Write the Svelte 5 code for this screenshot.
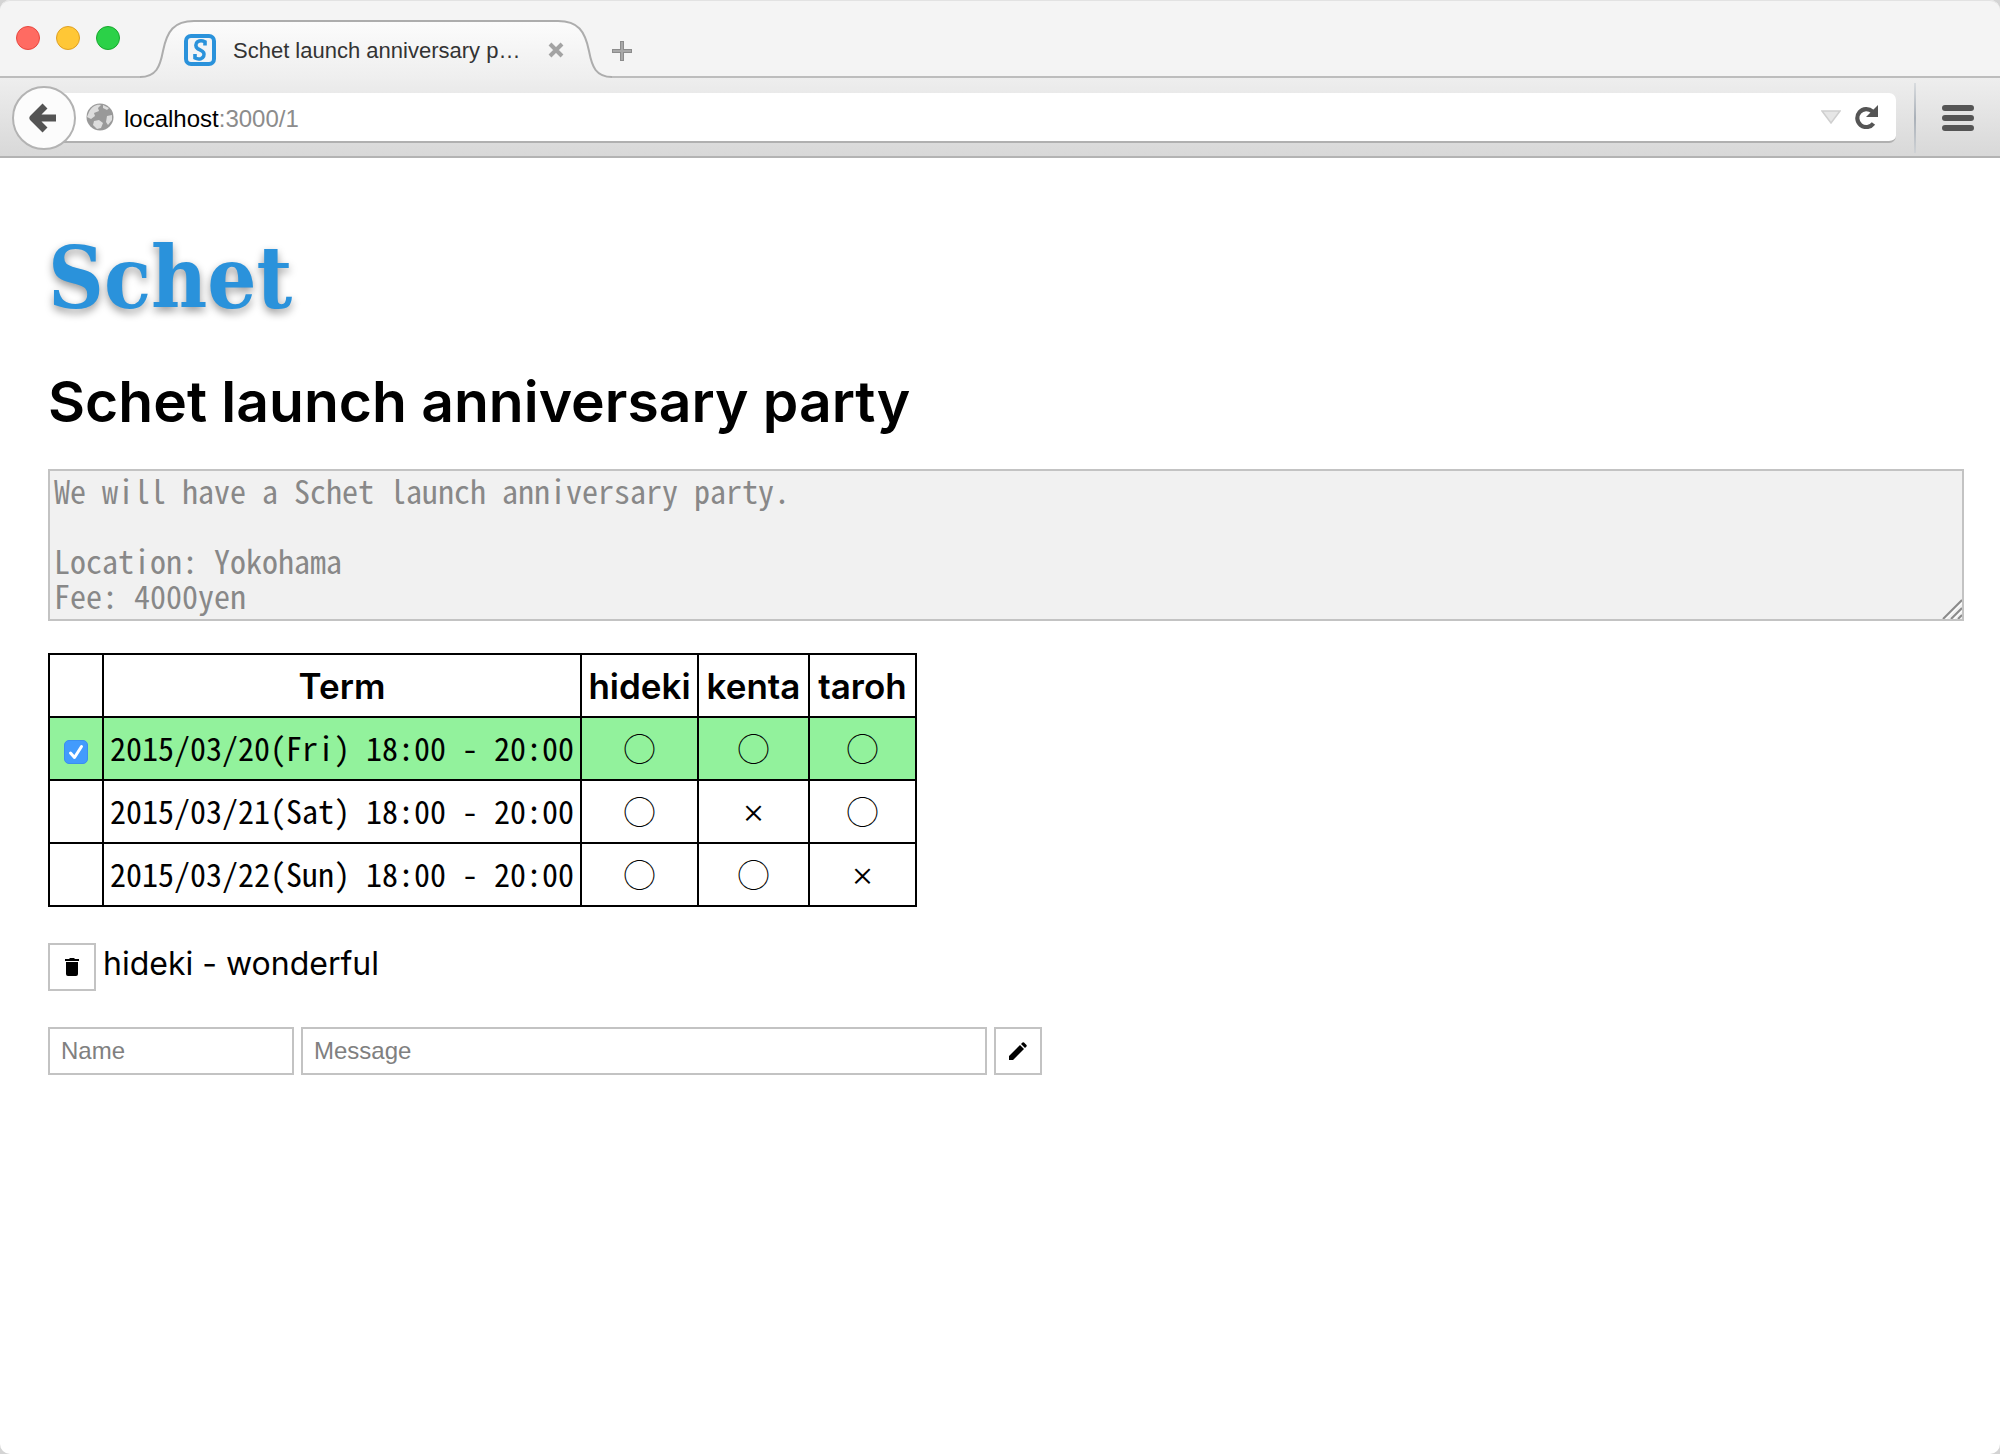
<script>
  const people = ['hideki', 'kenta', 'taroh'];
  const terms = [
    { label: '2015/03/20(Fri) 18:00 - 20:00', fixed: true, marks: ['◯', '◯', '◯'] },
    { label: '2015/03/21(Sat) 18:00 - 20:00', fixed: false, marks: ['◯', '×', '◯'] },
    { label: '2015/03/22(Sun) 18:00 - 20:00', fixed: false, marks: ['◯', '◯', '×'] }
  ];
  const description = 'We will have a Schet launch anniversary party.\n\nLocation: Yokohama\nFee: 4000yen';
</script>

<div class="window">
  <header>
    <div class="tabstrip">
      <div class="lights">
        <button class="light red" aria-label="Close window"></button>
        <button class="light yellow" aria-label="Minimize window"></button>
        <button class="light green" aria-label="Zoom window"></button>
      </div>
      <div class="tab">
        <svg class="tabshape" viewBox="0 0 474 60" width="474" height="60" aria-hidden="true">
          <defs>
            <linearGradient id="tabfill" x1="0" y1="0" x2="0" y2="1">
              <stop offset="0" stop-color="#fcfcfc" />
              <stop offset="1" stop-color="#eeeeee" />
            </linearGradient>
          </defs>
          <path d="M0 57C16 57 20 47 23 31C27 11 34 1 54 1H418C438 1 445 11 449 31C452 47 456 57 472 57V60H0Z" fill="url(#tabfill)" />
          <path d="M0 57C16 57 20 47 23 31C27 11 34 1 54 1H418C438 1 445 11 449 31C452 47 456 57 472 57" fill="none" stroke="#adadad" stroke-width="2" />
        </svg>
        <svg class="favicon" viewBox="0 0 32 32" width="32" height="32" aria-hidden="true">
          <rect x="2" y="2" width="28" height="28" rx="5" fill="#f3f4f6" stroke="#2a92db" stroke-width="4" />
          <path d="M21 11.500V7.800C18.500 6.600 15.500 6.600 13.600 7.800C11.200 9.500 11.400 12.800 13.500 14.500C15.500 16 18.500 16.500 19.600 18.600C20.800 21.200 19.500 24 16.800 24.700C14.500 25.200 12.500 24.800 11 24V20" fill="none" stroke="#2a92db" stroke-width="3.600" />
        </svg>
        <span class="title">Schet launch anniversary p…</span>
        <button class="plain" aria-label="Close tab">
          <svg viewBox="0 0 16 16" width="16" height="16"><path d="M2 2L14 14M14 2L2 14" stroke="#a3a3a3" stroke-width="4" /></svg>
        </button>
      </div>
      <button class="plain newtab" aria-label="New tab">
        <svg viewBox="0 0 20 20" width="20" height="20"><path d="M10 0V20M0 10H20" stroke="#8c8c8c" stroke-width="4" /><path d="M10 1V19M1 10H19" stroke="#a8a8a8" stroke-width="2" /></svg>
      </button>
    </div>
    <div class="toolbar">
      <button class="back" aria-label="Back">
        <svg viewBox="0 0 28 30" width="28" height="30"><path d="M16 3L4 15L16 27M5 15H27" fill="none" stroke="#545454" stroke-width="7" stroke-linejoin="round" /></svg>
      </button>
      <div class="urlbar">
        <svg viewBox="0 0 28 28" width="28" height="28" aria-hidden="true">
          <circle cx="14" cy="14" r="13.500" fill="#999" />
          <path d="M3 9C6 3 11 1 15 2L12 5L13 8L8 10L9 13L5 16L1 14ZM17 2L23 5L21 7L17 5ZM8 18L13 17L17 20L15 25L11 26L7 22ZM21 13L26 12L26 17L22 22L20 19Z" fill="#ddd" />
        </svg>
        <span class="url"><b>localhost</b>:3000/1</span>
        <button class="plain" aria-label="Show history">
          <svg viewBox="0 0 20 14" width="20" height="14"><path d="M1 1H19L10 13Z" fill="#e6e6e6" stroke="#cfcfcf" stroke-width="1.500" /></svg>
        </button>
        <button class="plain" aria-label="Reload">
          <svg viewBox="0 0 24 24" width="24" height="24"><path d="M18.500 18.500A9 9 0 1 1 17.500 6.500" fill="none" stroke="#555" stroke-width="4.200" /><path d="M23 0V12H11Z" fill="#555" /></svg>
        </button>
      </div>
      <span class="divider"></span>
      <button class="plain menu" aria-label="Open menu">
        <svg viewBox="0 0 32 28" width="32" height="28"><path d="M3 4H29M3 14H29M3 24H29" stroke="#555" stroke-width="6" stroke-linecap="round" /></svg>
      </button>
    </div>
  </header>

  <main>
    <a class="logo" href="/">Schet</a>
    <h1>Schet launch anniversary party</h1>
    <div class="notebox">
      <textarea aria-label="Description" readonly rows="4" value={description}></textarea>
      <svg class="grip" viewBox="0 0 20 20" width="20" height="20" aria-hidden="true"><path d="M1 20L20 1M9 20L20 9M16 20L20 16" stroke="#8a8a8a" stroke-width="2" /><path d="M3 21L21 3M11 21L21 11" stroke="#fff" stroke-width="1" /></svg>
    </div>
    <table>
      <colgroup><col class="c-check" /><col class="c-term" /><col class="c-first" /><col class="c-second" /><col class="c-third" /></colgroup>
      <thead>
        <tr>
          <th aria-label="Fixed"></th>
          <th>Term</th>
          {#each people as person}<th>{person}</th>{/each}
        </tr>
      </thead>
      <tbody>
        {#each terms as term}
          <tr class:fixed={term.fixed}>
            <td>
              {#if term.fixed}
                <label class="check">
                  <input type="checkbox" checked aria-label={term.label} />
                  <svg viewBox="0 0 24 24" width="24" height="24" aria-hidden="true"><path d="M6.500 13L10.500 17.500L17.500 6.500" fill="none" stroke="#fff" stroke-width="3" stroke-linecap="round" stroke-linejoin="round" /></svg>
                </label>
              {/if}
            </td>
            <td class="term">{term.label}</td>
            {#each term.marks as mark}<td class="mark" class:cross={mark === '×'}>{mark}</td>{/each}
          </tr>
        {/each}
      </tbody>
    </table>
    <div class="comment">
      <button class="square" aria-label="Delete comment">
        <svg viewBox="0 0 14 18" width="14" height="18"><path d="M1 4H13V16Q13 18 11 18H3Q1 18 1 16ZM0 1H4L5 0H9L10 1H14V3H0Z" /></svg>
      </button>
      <span>hideki - wonderful</span>
    </div>
    <form onsubmit={(e) => e.preventDefault()}>
      <input class="name" type="text" placeholder="Name" aria-label="Name" />
      <input class="message" type="text" placeholder="Message" aria-label="Message" />
      <button class="square" aria-label="Post comment">
        <svg viewBox="0 0 18 18" width="18" height="18"><path d="M0 14L11 3L15 7L4 18H0ZM12 2L13.500 0.500Q14.200 0 15 0.500L17.500 3Q18 3.800 17.500 4.500L16 6Z" /></svg>
      </button>
    </form>
  </main>
</div>

<style>
  :global(body) {
    margin: 0;
    background: #d4d4d4;
  }
  .window {
    min-height: 100vh;
    box-sizing: border-box;
    border-radius: 10px;
    background: #fff;
    color: #000;
    font-family: Inter, 'Noto Sans CJK JP', sans-serif;
    font-size: 32px;
  }
  button {
    font: inherit;
    color: inherit;
    cursor: pointer;
  }
  svg {
    display: block;
  }
  .plain {
    border: 0;
    padding: 0;
    background: none;
  }
  header {
    font-family: 'Liberation Sans', sans-serif;
    font-size: 24px;
  }
  .tabstrip {
    display: flex;
    height: 78px;
    box-sizing: border-box;
    border-bottom: 2px solid #bdbdbd;
    border-top: 1px solid #e2e2e2;
    border-radius: 10px 10px 0 0;
    background: #f4f4f4;
    padding-left: 16px;
  }
  .lights {
    display: flex;
    gap: 16px;
    padding-top: 25px;
    width: 124px;
  }
  .light {
    width: 24px;
    height: 24px;
    padding: 0;
    border: 1px solid;
    border-radius: 50%;
  }
  .red { background: #ff6b62; border-color: #e8473f; }
  .yellow { background: #ffc736; border-color: #dfa023; }
  .green { background: #2bd148; border-color: #17a82d; }
  .tab {
    position: relative;
    display: flex;
    align-items: center;
    box-sizing: border-box;
    width: 472px;
    height: 60px;
    margin-top: 19px;
    padding: 0 48px 0 44px;
  }
  .tab > * {
    position: relative;
  }
  .tab .tabshape {
    position: absolute;
    left: 0;
    top: 0;
  }
  .title {
    flex: 1;
    margin-left: 17px;
    padding-top: 2px;
    color: #333;
    font-size: 22px;
    white-space: nowrap;
  }
  .newtab {
    align-self: flex-start;
    margin-top: 40px;
  }
  .toolbar {
    display: flex;
    align-items: center;
    height: 80px;
    box-sizing: border-box;
    border-bottom: 2px solid #b3b3b3;
    background: linear-gradient(#eeeeee, #d8d8d8);
    padding: 2px 26px 0 12px;
  }
  .back {
    position: relative;
    z-index: 1;
    display: flex;
    align-items: center;
    justify-content: center;
    width: 64px;
    height: 64px;
    margin-right: -16px;
    padding: 0 2px 0 0;
    border: 2px solid #b3b3b3;
    border-radius: 50%;
    background: #fcfcfc;
  }
  .urlbar {
    flex: 1;
    display: flex;
    align-items: center;
    gap: 14px;
    height: 50px;
    box-sizing: border-box;
    border-bottom: 2px solid #b0b0b0;
    border-radius: 0 7px 7px 0;
    background: #fff;
    padding: 0 17px 0 26px;
  }
  .url {
    flex: 1;
    margin-left: -4px;
    padding-top: 4px;
    color: #8c8c8c;
  }
  .url b {
    color: #000;
    font-weight: 400;
  }
  .divider {
    width: 2px;
    height: 70px;
    margin: 0 26px 0 18px;
    background: linear-gradient(#d9dcdf, #a9b0b8, #cfd2d5);
  }
  main {
    padding: 64px 36px 48px 48px;
  }
  .logo {
    display: block;
    width: fit-content;
    color: #2a92db;
    font-family: 'DejaVu Serif Condensed', 'DejaVu Serif', serif;
    font-size: 86px;
    font-weight: 700;
    line-height: 112px;
    text-decoration: none;
    text-shadow: 0 4px 8px rgba(0, 0, 0, 0.4);
  }
  h1 {
    margin: 32px 0 31px;
    font-size: 57px;
    font-weight: 600;
    line-height: 72px;
  }
  .notebox {
    position: relative;
    margin-bottom: 32px;
  }
  textarea {
    display: block;
    width: 100%;
    box-sizing: border-box;
    padding: 2px 4px 6px;
    border: 2px solid #c3c3c3;
    background: #f1f1f1;
    color: #888;
    font: 32px / 35px 'Noto Sans Mono CJK JP', 'Liberation Mono', monospace;
    resize: none;
    overflow: hidden;
  }
  .grip {
    position: absolute;
    right: 2px;
    bottom: 2px;
  }
  table {
    table-layout: fixed;
    width: 869px;
    border-collapse: collapse;
    text-align: center;
  }
  .c-check { width: 54px; }
  .c-term { width: 478px; }
  .c-first { width: 117px; }
  .c-second { width: 111px; }
  .c-third { width: 107px; }
  th, td {
    height: 61px;
    box-sizing: content-box;
    padding: 0;
    border: 2px solid #000;
    line-height: 40px;
    white-space: nowrap;
  }
  th {
    font-size: 35px;
    font-weight: 600;
  }
  td.term, td.mark {
    height: 57px;
    padding-bottom: 4px;
  }
  .fixed {
    background: #92f29c;
  }
  .term {
    font: 32px / 40px 'Noto Sans Mono CJK JP', 'Liberation Mono', monospace;
  }
  .mark {
    font-family: 'Noto Sans CJK JP', sans-serif;
  }
  td.cross {
    padding: 2px 0;
    font-size: 24px;
    font-weight: 500;
  }
  .check {
    display: grid;
    width: 24px;
    margin: 6px auto 0;
  }
  .check > * {
    grid-area: 1 / 1;
    pointer-events: none;
  }
  input[type='checkbox'] {
    appearance: none;
    width: 24px;
    height: 24px;
    margin: 0;
    border: 1px solid #3b8fee;
    border-radius: 5px;
    background: #429bfd;
  }
  .comment {
    display: flex;
    gap: 7px;
    margin-top: 36px;
    line-height: 42px;
  }
  .square {
    display: flex;
    align-items: center;
    justify-content: center;
    width: 48px;
    height: 48px;
    padding: 0;
    border: 2px solid #c3c3c3;
    background: #fff;
  }
  form {
    display: flex;
    gap: 7px;
    margin-top: 36px;
  }
  input[type='text'] {
    height: 48px;
    box-sizing: border-box;
    padding: 0 11px;
    border: 2px solid #c3c3c3;
    background: #fff;
    font: 24px 'Liberation Sans', sans-serif;
  }
  input::placeholder {
    color: #808080;
    opacity: 1;
  }
  .name { width: 246px; }
  .message { width: 686px; }
</style>
